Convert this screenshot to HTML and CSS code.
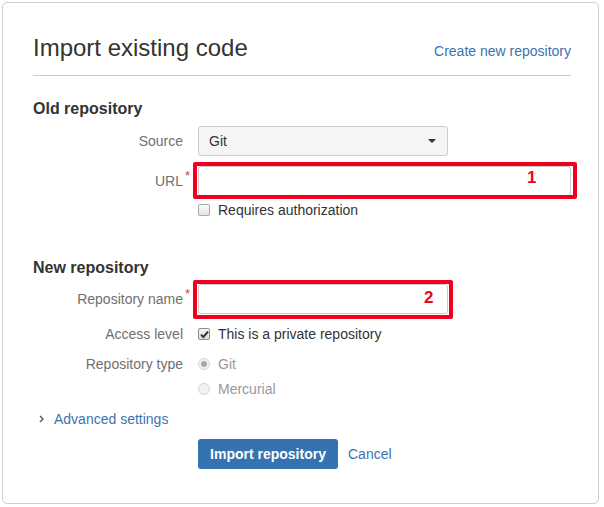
FILE: index.html
```html
<!DOCTYPE html>
<html>
<head>
<meta charset="utf-8">
<link rel="stylesheet" href="styles.css">
</head>
<body>
<div class="card">
  <div class="header">
    <h1 class="title">Import existing code</h1>
    <a class="link" href="#">Create new repository</a>
  </div>

  <h2 class="section old">Old repository</h2>

  <div class="row row-source">
    <label class="label">Source</label>
    <div class="select"><span>Git</span><span class="caret"></span></div>
  </div>

  <div class="row row-url">
    <label class="label">URL<span class="req">*</span></label>
    <div class="field field-wide">
      <div class="input"></div>
      <div class="mark mark-1"><span class="num num-1">1</span></div>
    </div>
  </div>

  <div class="row row-check">
    <span class="label"></span>
    <div class="opt"><span class="cb"></span><span class="opt-text">Requires authorization</span></div>
  </div>

  <h2 class="section new">New repository</h2>

  <div class="row row-name">
    <label class="label">Repository name<span class="req">*</span></label>
    <div class="field field-narrow">
      <div class="input"></div>
      <div class="mark mark-2"><span class="num num-2">2</span></div>
    </div>
  </div>

  <div class="row row-access">
    <label class="label">Access level</label>
    <div class="opt"><span class="cb checked"><svg width="9" height="9" viewBox="0 0 9 9"><path d="M1 4.6 L3.4 7 L8 1.6" fill="none" stroke="#333" stroke-width="2"/></svg></span><span class="opt-text">This is a private repository</span></div>
  </div>

  <div class="row row-type">
    <label class="label">Repository type</label>
    <div class="opt"><span class="radio on"></span><span class="opt-text dis">Git</span></div>
  </div>

  <div class="row row-merc">
    <span class="label"></span>
    <div class="opt"><span class="radio"></span><span class="opt-text dis">Mercurial</span></div>
  </div>

  <div class="advanced">
    <svg class="chev" width="5" height="8" viewBox="0 0 5 8"><path d="M1 1 L4 4 L1 7" fill="none" stroke="#555" stroke-width="1.4"/></svg>
    <a class="link" href="#">Advanced settings</a>
  </div>

  <div class="row row-buttons">
    <span class="label"></span>
    <div class="actions">
      <button class="btn">Import repository</button>
      <a class="link" href="#">Cancel</a>
    </div>
  </div>
</div>
</body>
</html>
```
FILE: styles.css
```css
* { box-sizing: border-box; }
html, body { margin: 0; padding: 0; background: #fff; }
body {
  font-family: "Liberation Sans", Arial, sans-serif;
  font-size: 14px;
  color: #333;
}
.card {
  margin: 2px 0 0 2px;
  width: 597px;
  height: 502px;
  border: 1px solid #cfcfcf;
  border-radius: 5px;
  padding: 30px 27px 0 30px;
}
.header {
  display: flex;
  justify-content: space-between;
  align-items: baseline;
  border-bottom: 1px solid #ccc;
  padding-bottom: 12px;
}
.title {
  margin: 0;
  font-size: 24px;
  font-weight: normal;
  line-height: 30px;
  color: #333;
}
.link {
  color: #3b73af;
  text-decoration: none;
  font-size: 14px;
}
.section {
  margin: 0;
  font-size: 16px;
  font-weight: bold;
  line-height: 20px;
  color: #333;
}
.old { margin-top: 23px; }
.new { margin-top: 38px; }

.row {
  display: flex;
  align-items: center;
}
.label {
  width: 150px;
  flex: none;
  margin-right: 15px;
  text-align: right;
  color: #707070;
  position: relative;
  line-height: 20px;
}
.req {
  position: absolute;
  right: -7px;
  top: -5px;
  color: #d04437;
  font-size: 13px;
}
.row-source { margin-top: 7px; height: 30px; }
.row-url { margin-top: 10px; height: 30px; }
.row-check { margin-top: 4px; height: 20px; }
.row-name { margin-top: 6px; height: 30px; }
.row-access { margin-top: 10px; height: 20px; }
.row-type { margin-top: 10px; height: 20px; }
.row-merc { margin-top: 5px; height: 20px; }
.row-buttons { margin-top: 10px; height: 30px; }

.select {
  width: 250px;
  height: 30px;
  border: 1px solid #ccc;
  border-radius: 3px;
  background: #f5f5f5;
  display: flex;
  align-items: center;
  justify-content: space-between;
  padding: 0 11px 0 10px;
  color: #333;
}
.caret {
  width: 0; height: 0;
  border-left: 4px solid transparent;
  border-right: 4px solid transparent;
  border-top: 4px solid #333;
}
.field { position: relative; height: 30px; }
.field-wide { width: 374px; }
.field-narrow { width: 250px; }
.input {
  width: 100%;
  height: 30px;
  border: 1px solid #ccc;
  border-radius: 3px;
  background: #fff;
}
.mark {
  position: absolute;
  border: 4px solid #f0001e;
  border-radius: 2px;
}
.mark-1 { left: -5px; right: -6px; top: -4px; bottom: -3px; }
.mark-2 { left: -5px; right: -5px; top: -4px; bottom: -5px; }
.num {
  position: absolute;
  color: #f0001e;
  font-weight: bold;
  font-size: 17px;
  line-height: 20px;
}
.num-1 { left: 330px; top: 2px; }
.num-2 { left: 227px; top: 4px; }

.opt { display: flex; align-items: center; }
.opt-text { margin-left: 8px; line-height: 20px; color: #333; }
.opt-text.dis { color: #999; }
.cb {
  width: 12px; height: 12px;
  border: 1px solid #a9a9a9;
  border-radius: 2px;
  background: linear-gradient(#fafafa, #e4e4e4);
  display: flex;
  align-items: center;
  justify-content: center;
}
.cb.checked { background: linear-gradient(#f3f3f3, #dcdcdc); border-color: #8f8f8f; }
.radio {
  width: 12px; height: 12px;
  border: 1px solid #d3d3d3;
  border-radius: 50%;
  background: #f2f2f2;
  position: relative;
}
.radio.on::after {
  content: "";
  position: absolute;
  left: 2px; top: 2px;
  width: 6px; height: 6px;
  border-radius: 50%;
  background: #a8a8a8;
}

.advanced {
  margin-top: 10px;
  height: 20px;
  display: flex;
  align-items: center;
  padding-left: 6px;
}
.chev { margin-right: 10px; }

.actions { display: flex; align-items: center; }
.btn {
  height: 30px;
  width: 140px;
  border: none;
  border-radius: 3px;
  background: #3572b0;
  color: #fff;
  font-family: "Liberation Sans", Arial, sans-serif;
  font-size: 14px;
  font-weight: bold;
  padding: 0;
}
.actions .link { margin-left: 10px; }
```
